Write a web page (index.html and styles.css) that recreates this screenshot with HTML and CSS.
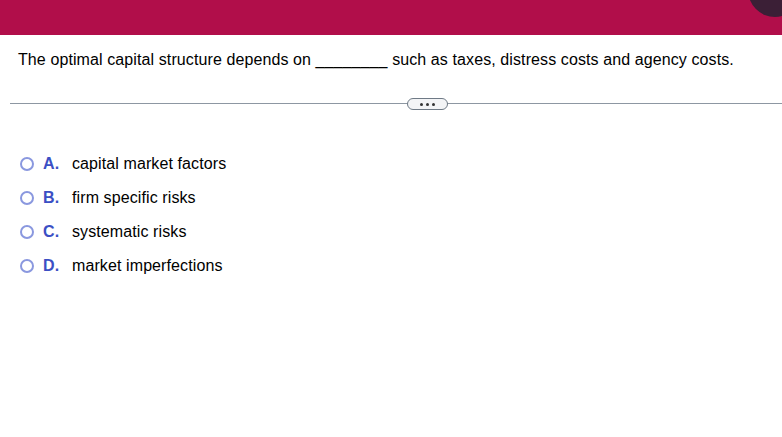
FILE: index.html
```html
<!DOCTYPE html>
<html>
<head>
<meta charset="utf-8">
<link rel="stylesheet" href="styles.css">
</head>
<body>
<header class="topbar">
  <span class="avatar"></span>
</header>
<main class="content">
  <p class="question">The optimal capital structure depends on ________ such as taxes, distress costs and agency costs.</p>
  <div class="divider">
    <button class="more"><span class="dot"></span><span class="dot"></span><span class="dot"></span></button>
  </div>
  <ul class="options">
    <li class="option"><span class="radio"></span><span class="letter">A.</span><span class="label">capital market factors</span></li>
    <li class="option"><span class="radio"></span><span class="letter">B.</span><span class="label">firm specific risks</span></li>
    <li class="option"><span class="radio"></span><span class="letter">C.</span><span class="label">systematic risks</span></li>
    <li class="option"><span class="radio"></span><span class="letter">D.</span><span class="label">market imperfections</span></li>
  </ul>
</main>
</body>
</html>
```
FILE: styles.css
```css
* { box-sizing: border-box; }
html, body { margin: 0; padding: 0; background: #fff; }
body {
  font-family: "Liberation Sans", Arial, sans-serif;
  color: #000;
  overflow: hidden;
}
.topbar {
  position: relative;
  height: 35px;
  background: #b10e4a;
  overflow: hidden;
}
.avatar {
  position: absolute;
  left: 748px;
  top: -37px;
  width: 54px;
  height: 54px;
  border-radius: 50%;
  background: #3b1f36;
}
.content { padding: 0; }
.question {
  margin: 0;
  padding: 15px 0 0 18px;
  font-size: 16px;
  line-height: 19px;
  letter-spacing: 0.1px;
}
.divider {
  position: relative;
  margin: 29px 0 0 10px;
  height: 12px;
  display: flex;
  align-items: center;
}
.divider::before {
  content: "";
  position: absolute;
  left: 0;
  right: 0;
  top: 5px;
  height: 1px;
  background: #8d97a2;
}
.more {
  position: relative;
  margin-left: 397px;
  width: 41px;
  height: 12px;
  padding: 0;
  border: 1px solid #6f7a86;
  border-radius: 6px;
  background: #f3f4f6;
  display: flex;
  align-items: center;
  justify-content: center;
  gap: 3px;
}
.dot {
  width: 3px;
  height: 3px;
  border-radius: 50%;
  background: #333;
}
.options {
  list-style: none;
  margin: 45px 0 0 0;
  padding: 0 0 0 20px;
  display: flex;
  flex-direction: column;
  gap: 16px;
}
.option {
  display: flex;
  align-items: center;
  height: 18px;
  font-size: 16px;
  letter-spacing: 0.1px;
}
.radio {
  width: 14px;
  height: 14px;
  border: 2px solid #8a98df;
  border-radius: 50%;
  flex: none;
}
.letter {
  margin-left: 9px;
  width: 29px;
  font-weight: bold;
  color: #3b4fc4;
}
.label { color: #000; }
```
